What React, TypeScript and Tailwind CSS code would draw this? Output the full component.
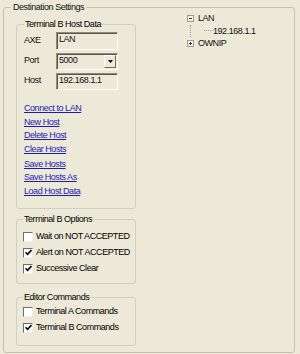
import React from 'react'

function GroupBox({ title, className, children }: { title: string; className?: string; children?: React.ReactNode }) {
  return (
    <fieldset className={`border border-[#D0D0BF] rounded-[3px] ${className ?? ''}`}>
      <legend className="px-[1px] leading-[13px] text-black">{title}</legend>
      {children}
    </fieldset>
  )
}

function Check({ checked, label }: { checked?: boolean; label: string }) {
  return (
    <div className="flex items-center h-[13px]">
      <span className="w-[10px] h-[10px] shrink-0 bg-white border border-t-[#716F64] border-l-[#716F64] border-b-[#F1EFE2] border-r-[#F1EFE2] flex items-center justify-center">
        {checked && (
          <svg width="7" height="7" viewBox="0 0 7 7">
            <path d="M0.5 3.2 L2.6 5.4 L6.5 1" stroke="#000" strokeWidth="1.6" fill="none" />
          </svg>
        )}
      </span>
      <span className="ml-[3px] text-black whitespace-nowrap">{label}</span>
    </div>
  )
}

const sunken =
  'border border-t-[#8E8B7B] border-l-[#8E8B7B] border-b-white border-r-white shadow-[inset_1px_1px_0_#5A5848]'

function Expander({ open }: { open: boolean }) {
  return (
    <svg width="7" height="7" viewBox="0 0 7 7" className="block">
      <rect x="0.5" y="0.5" width="6" height="6" fill="#F7F7F2" stroke="#9C9A8C" />
      <path d="M2 3.5 H5" stroke="#333" />
      {!open && <path d="M3.5 2 V5" stroke="#333" />}
    </svg>
  )
}

export default function App() {
  const links = ['Connect to LAN', 'New Host', 'Delete Host', 'Clear Hosts']
  const links2 = ['Save Hosts', 'Save Hosts As', 'Load Host Data']

  return (
    <div className="w-[300px] h-[354px] bg-[#ECE9D8] overflow-hidden font-['Liberation_Sans',sans-serif] text-[9px] tracking-[-0.45px] text-[#111] pt-[1px]">
      <fieldset className="ml-[3px] w-[292px] h-[352px] border border-[#C5C2B2] rounded-[3px] pl-[12px] pt-[4px]">
        <legend className="ml-[-5px] px-[2px] leading-[13px]">Destination Settings</legend>
        <div className="flex">
          <div className="w-[120px] flex flex-col">
            <GroupBox title="Terminal B Host Data" className="h-[191px] pl-[7px] pr-[2px]">
              <div className="flex flex-col gap-[2px] mt-[1px]">
                <div className="flex items-center h-[18px]">
                  <span className="w-[32px]">AXE</span>
                  <div className={`w-[62px] h-[18px] ${sunken} pl-[2px] leading-[13px]`}>LAN</div>
                </div>
                <div className="flex items-center h-[18px]">
                  <span className="w-[32px]">Port</span>
                  <div className={`w-[62px] h-[17px] ${sunken} flex`}>
                    <span className="flex-1 pl-[2px] leading-[13px]">5000</span>
                    <span className="w-[12px] h-[13px] mt-[1px] mr-[1px] bg-[#ECE9D8] border border-t-white border-l-white border-b-[#716F64] border-r-[#716F64] flex items-center justify-center">
                      <svg width="5" height="3" viewBox="0 0 5 3">
                        <path d="M0 0 H5 L2.5 3 Z" fill="#000" />
                      </svg>
                    </span>
                  </div>
                </div>
                <div className="flex items-center h-[18px]">
                  <span className="w-[32px]">Host</span>
                  <div className={`w-[62px] h-[17px] ${sunken} pl-[2px] leading-[13px]`}>192.168.1.1</div>
                </div>
              </div>
              <div className="mt-[12px] flex flex-col">
                {links.map((l) => (
                  <span key={l} className="h-[13.5px] leading-[13.5px] text-[#1C1CB4] underline w-fit">
                    {l}
                  </span>
                ))}
                <div className="h-[1.5px]" />
                {links2.map((l) => (
                  <span key={l} className="h-[13.5px] leading-[13.5px] text-[#1C1CB4] underline w-fit">
                    {l}
                  </span>
                ))}
              </div>
            </GroupBox>

            <GroupBox title="Terminal B Options" className="mt-[4px] h-[71px] pl-[6px] pt-[4px]">
              <div className="flex flex-col gap-[3px]">
                <Check label="Wait on NOT ACCEPTED" />
                <Check checked label="Alert on NOT ACCEPTED" />
                <Check checked label="Successive Clear" />
              </div>
            </GroupBox>

            <GroupBox title="Editor Commands" className="mt-[7px] h-[55px] pl-[6px] pt-[1px]">
              <div className="flex flex-col gap-[3px]">
                <Check label="Terminal A Commands" />
                <Check checked label="Terminal B Commands" />
              </div>
            </GroupBox>
          </div>

          <div className="ml-[48px] mt-[-6px] flex flex-col">
            <div className="flex items-center h-[12.5px]">
              <span className="w-[12px] flex justify-center">
                <Expander open />
              </span>
              <span className="ml-[2px] leading-[12px]">LAN</span>
            </div>
            <div className="flex items-center h-[12.5px]">
              <span className="w-[12px] h-full flex justify-center">
                <span className="w-0 h-full border-l border-dotted border-[#A0A0A0]" />
              </span>
              <span className="w-[17px] flex justify-end">
                <span className="w-[9px] border-t border-dotted border-[#A0A0A0]" />
              </span>
              <span className="leading-[12px]">192.168.1.1</span>
            </div>
            <div className="flex items-center h-[12.5px]">
              <span className="w-[12px] flex justify-center">
                <Expander open={false} />
              </span>
              <span className="ml-[2px] leading-[12px]">OWNIP</span>
            </div>
          </div>
        </div>
      </fieldset>
    </div>
  )
}
